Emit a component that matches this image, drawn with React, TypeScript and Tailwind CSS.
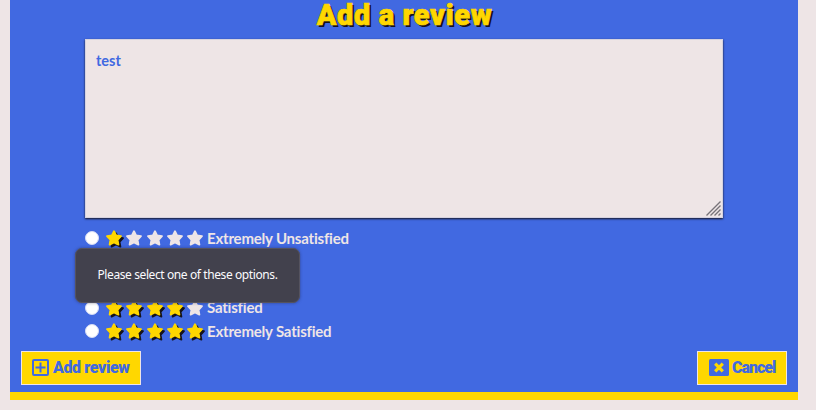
import React from "react";

const STAR =
  "M8 1.2 10.1 5.4 15 6.2 11.6 9.8 12.4 14.6 8 12.4 3.6 14.6 4.4 9.8 1 6.2 5.9 5.4Z";

function Star({ filled }: { filled: boolean }) {
  return (
    <svg width="18" height="18" viewBox="0 0 18 18" className="shrink-0" strokeLinejoin="round" strokeWidth="1.8">
      {filled && <path d={STAR} fill="#15131c" stroke="#15131c" transform="translate(2 2)" />}
      <path d={STAR} fill={filled ? "#ffd700" : "#eee5e6"} stroke={filled ? "#ffd700" : "#eee5e6"} />
    </svg>
  );
}

const OPTIONS = [
  { stars: 1, label: "Extremely Unsatisfied" },
  { stars: 2, label: "Unsatisfied" },
  { stars: 3, label: "Neutral" },
  { stars: 4, label: "Satisfied" },
  { stars: 5, label: "Extremely Satisfied" },
];

function RatingRow({ stars, label }: { stars: number; label: string }) {
  return (
    <label className="flex h-[23.25px] items-center">
      <span className="size-[14px] shrink-0 rounded-full border border-[#d5dcf6] bg-white" />
      <span className="mt-[2px] ml-[7px] flex w-[101px] gap-[2.25px]">
        {[1, 2, 3, 4, 5].map((n) => (
          <Star key={n} filled={n <= stars} />
        ))}
      </span>
      <span className="font-['Lato',sans-serif] text-[15px] leading-none font-bold tracking-[-0.2px] whitespace-nowrap text-[#eee5e6]">
        {label}
      </span>
    </label>
  );
}

export default function App() {
  return (
    <div className="h-[410px] w-[816px] overflow-hidden bg-[#eee5e6] pl-[10px]">
      <main className="flex h-[400px] w-[788px] flex-col border-b-8 border-[#ffd700] bg-[#4169e1]">
        <h1 className="h-[39px] pl-px text-center font-['Roboto',sans-serif] text-[29px] leading-[30px] font-black tracking-[0.6px] whitespace-nowrap text-[#ffd700] [-webkit-text-stroke:0.7px_#ffd700] [text-shadow:2px_2px_0_#15131c]">
          Add a review
        </h1>
        <div className="relative ml-[75px] h-[179px] w-[638px] shrink-0">
          <textarea
            readOnly
            defaultValue="test"
            className="block size-full resize-none border border-[#d5d2df] bg-[#eee5e6] px-[10px] py-[11px] font-['Lato',sans-serif] text-[14.5px] leading-5 font-bold text-[#4169e1] shadow-[0_1px_2px_#15131c] outline-none"
          />
          <svg className="absolute right-[2px] bottom-[2px]" width="15" height="15" viewBox="0 0 15 15" stroke="#777379" strokeWidth="1.4">
            <path d="M.5 14.5 14.5 .5M4.5 14.5 14.5 4.5M8.5 14.5 14.5 8.5M12.5 14.5 14.5 12.5" />
          </svg>
        </div>
        <div className="relative mt-[8.5px] ml-[75px] flex flex-col">
          {OPTIONS.map((o) => (
            <RatingRow key={o.stars} {...o} />
          ))}
          <div
            role="tooltip"
            className="absolute top-[21.5px] left-[-10px] flex h-[55px] w-[225px] items-center justify-center rounded-[7px] border border-[#55535f] bg-[#42414d] pb-px font-['Noto_Sans',sans-serif] text-[12px] tracking-[-0.4px] whitespace-nowrap text-[#fbfbfe] shadow-[0_0_3px_rgba(30,30,60,0.5)]"
          >
            Please select one of these options.
          </div>
        </div>
        <div className="mt-auto mb-[7px] flex justify-between px-[11px]">
          <button className="flex h-[34px] w-[120px] items-center border border-[#eee5e6] bg-[#ffd700] pl-[11px] font-['Roboto',sans-serif] text-[16px] font-black tracking-[-0.4px] whitespace-nowrap text-[#4169e1]">
            <svg width="17" height="17" viewBox="0 0 17 17" fill="none" stroke="currentColor" strokeWidth="2" className="mr-[4px] mb-[2px] ml-[-1px] shrink-0">
              <rect x="1" y="1" width="15" height="15" rx="1" />
              <path d="M8.5 3.5v10M3.5 8.5h10" />
            </svg>
            Add review
          </button>
          <button className="flex h-[34px] w-[90px] items-center border border-[#eee5e6] bg-[#ffd700] pl-[11px] font-['Roboto',sans-serif] text-[16px] font-black tracking-[-1px] whitespace-nowrap text-[#4169e1]">
            <svg width="20" height="17" viewBox="0 0 20 17" className="mr-[3px] mb-[2px] shrink-0">
              <rect width="20" height="17" rx="1.5" fill="currentColor" />
              <path d="m6.2 4.7 7.6 7.6m0-7.6-7.6 7.6" stroke="#ffd700" strokeWidth="3.2" />
            </svg>
            Cancel
          </button>
        </div>
      </main>
    </div>
  );
}
